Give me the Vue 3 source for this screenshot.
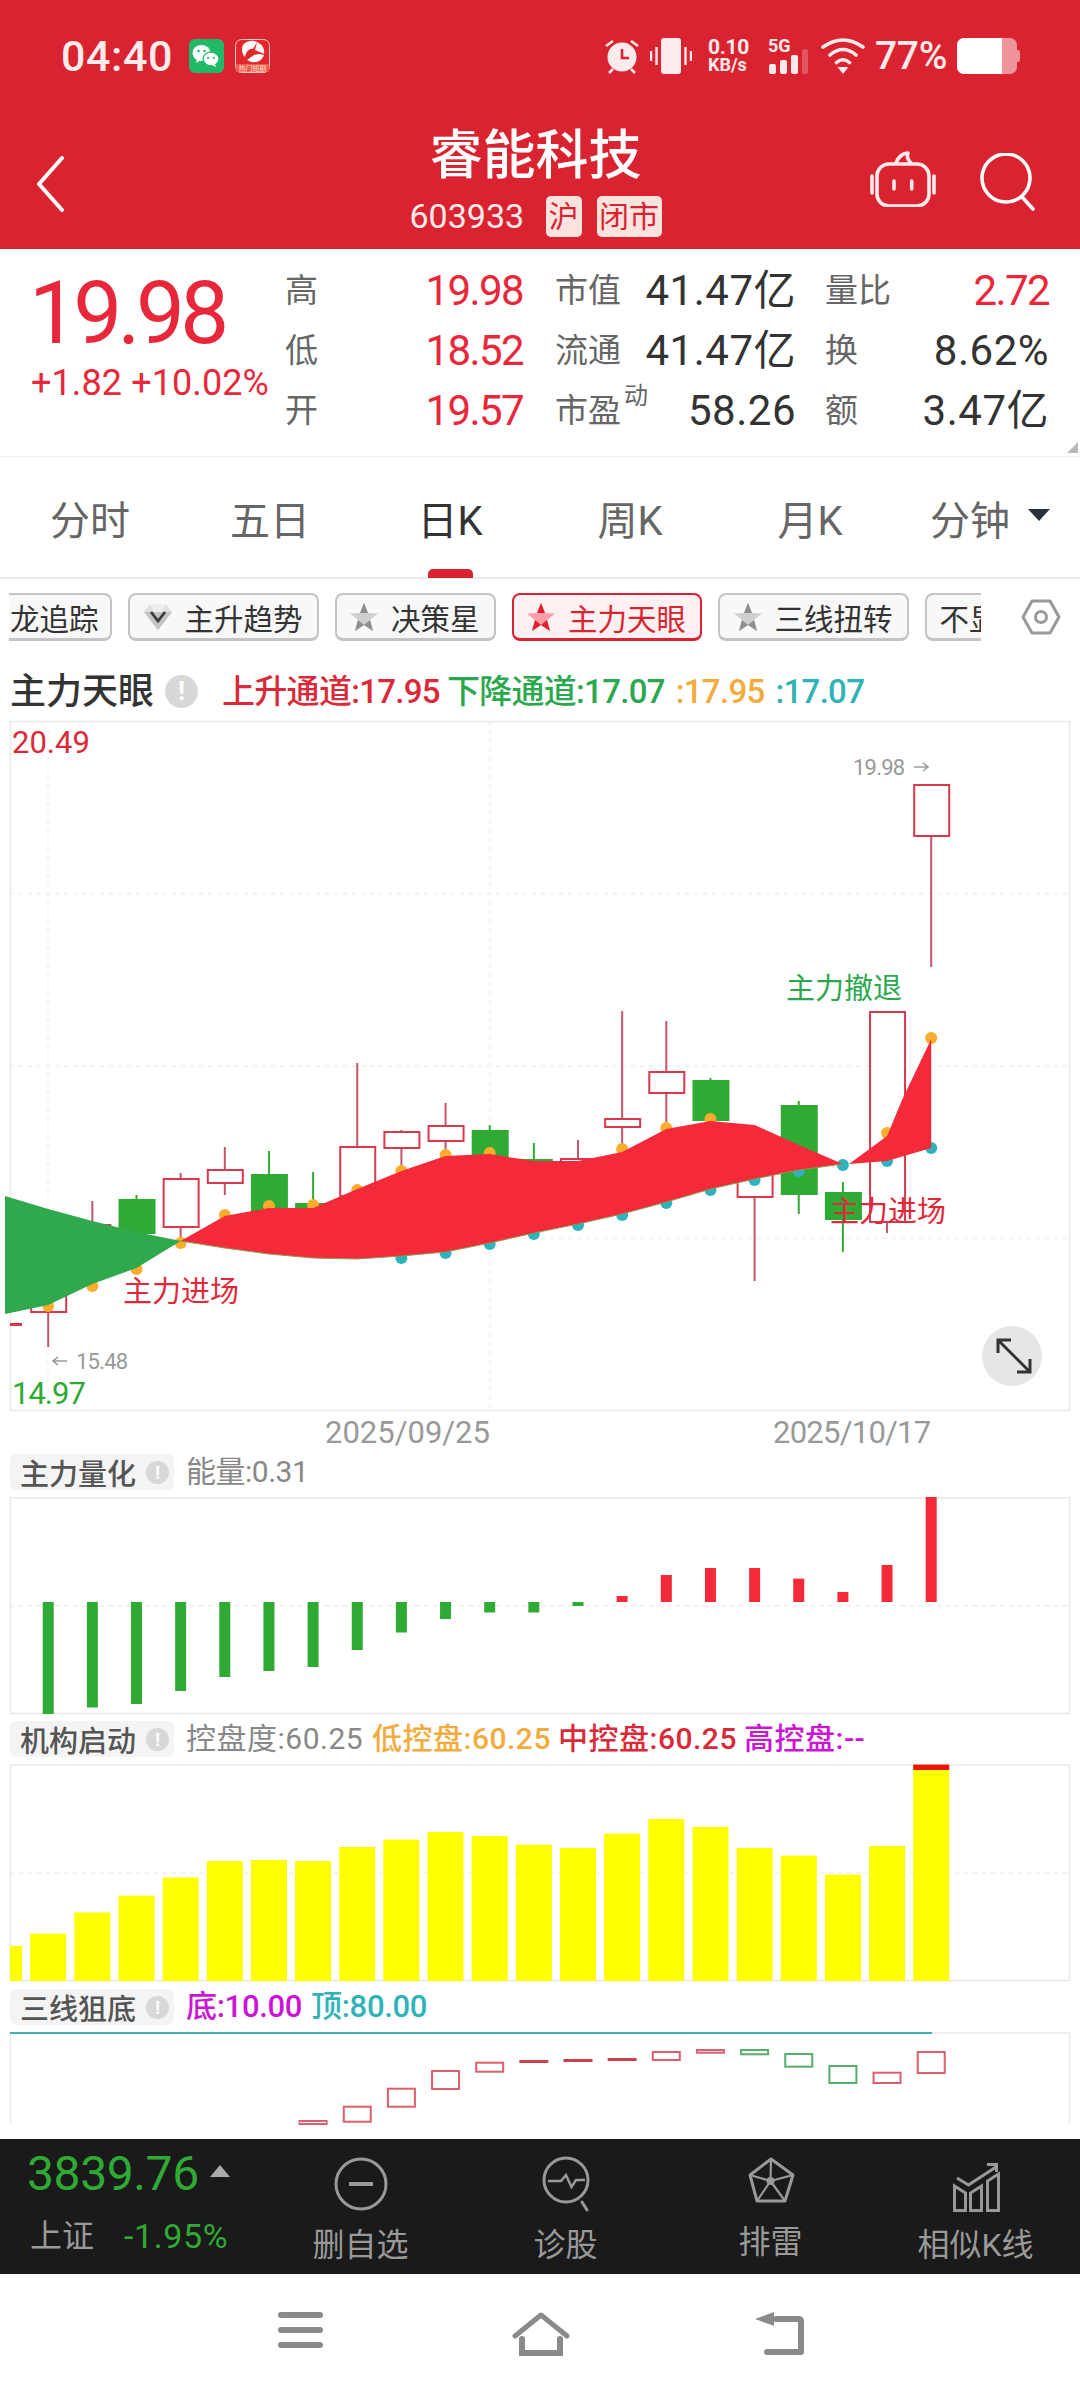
<script setup>
const X = (i) => 48.2 + 44.15 * i

// i, wickTop, wickBottom, bodyTop, bodyBottom, rising
const candleData = [
  [0, 1270, 1347, 1270, 1312, 1], [1, 1201, 1270, 1225, 1265, 1], [2, 1195, 1240, 1200, 1233, 0],
  [3, 1173, 1243, 1179, 1227, 1], [4, 1147, 1195, 1170, 1183, 1], [5, 1151, 1215, 1175, 1211, 0],
  [6, 1172, 1215, 1204, 1212, 0], [7, 1063, 1200, 1147, 1196, 1], [8, 1130, 1171, 1132, 1148, 1],
  [9, 1103, 1157, 1126, 1141, 1], [10, 1125, 1160, 1131, 1158, 0], [11, 1143, 1165, 1160, 1165, 0],
  [12, 1140, 1175, 1159, 1175, 1], [13, 1011, 1152, 1119, 1127, 1], [14, 1021, 1129, 1072, 1093, 1],
  [15, 1078, 1122, 1081, 1120, 0], [16, 1170, 1281, 1170, 1197, 1], [17, 1101, 1214, 1106, 1194, 0],
  [18, 1182, 1252, 1193, 1219, 0], [19, 1012, 1233, 1012, 1222, 1], [20, 785, 967, 785, 836, 1]
]
const candles = candleData.map(([i, wt, wb, bt, bb, up]) => ({
  x: X(i), wt, wb, bt, bb,
  color: up ? '#d8394d' : '#2faa35',
  wick: up ? '#c4566a' : '#2faa35',
  fill: up ? '#fff' : '#2faa35'
}))

const orange = [[0,1306],[1,1286],[2,1269],[3,1243],[4,1215],[5,1206],[6,1205],[7,1190],[8,1171],[9,1155],[10,1153],[13,1149],[14,1128],[15,1119],[19,1133],[20,1038]]
const cyan = [[8,1258],[9,1253],[10,1244],[11,1234],[12,1225],[13,1215],[14,1203],[15,1190],[16,1180],[17,1171],[18,1165],[19,1161],[20,1148]]
const orangeDots = orange.map(([i, y]) => ({ x: X(i), y }))
const cyanDots = cyan.map(([i, y]) => ({ x: X(i), y }))

const upper = [1241,1216,1208,1208,1189,1171,1156,1154,1161,1161,1152,1129,1121,1125,1145,1164]
const lower = [1241,1248,1254,1258,1259,1256,1252,1243,1233,1224,1214,1202,1189,1179,1170,1164]
const toPts = (arr) => arr.map((y, k) => `${X(k + 3).toFixed(1)},${y}`)
const redBand = [...toPts(upper), ...toPts(lower).reverse()].join(' ')
const lowerEdge = toPts(lower).join(' ')
const redTail = `849,1164 ${X(19).toFixed(1)},1136 902,1100 ${X(20).toFixed(1)},1039 ${X(20).toFixed(1)},1148 ${X(19).toFixed(1)},1161`
const greenBand = `5,1196 ${X(0)},1209 ${X(1)},1221 ${X(2)},1232 ${X(3)},1241 ${X(2)},1268 ${X(1)},1284 ${X(0)},1305 5,1314`

const energyEnds = [1714,1707.5,1704,1691,1677,1671,1667,1650,1632.5,1619,1612.5,1612.5,1606,1596,1575,1568,1568,1578.6,1592,1565,1497]
const energy = energyEnds.map((end, i) => ({
  x: X(i) - 5.5,
  y: end > 1602 ? 1602 : end,
  h: Math.abs(end - 1602),
  fill: end > 1602 ? '#2faa35' : '#f42a3a'
}))

const controlTops = [1933.6,1912.5,1895.7,1877.5,1861,1860,1861,1847,1839.6,1832,1836,1844.6,1848,1833.6,1819,1827,1848,1855.7,1874.6,1846,1764.6]
const control = controlTops.map((y, i) => ({ x: X(i) - 18, y, h: 1981 - y }))

const thirdData = [
  [6,2121,3,'r'],[7,2106.7,15,'r'],[8,2088.7,18,'r'],[9,2071,18,'r'],[10,2062.7,9,'r'],
  [11,2061,1,'d'],[12,2060,1,'d'],[13,2059,1,'d'],[14,2052,8,'r'],[15,2050,2.7,'r'],
  [16,2050,4.3,'g'],[17,2054,12.7,'g'],[18,2066,17,'g'],[19,2072.7,10.3,'r'],[20,2052,21,'r']
]
const thirdColors = { r: '#d9606c', d: '#c9404e', g: '#56ad6c' }
const third = thirdData.map(([i, y, h, c]) => ({ x: X(i) - 13.5, y, h, color: thirdColors[c] }))

const tabs = [
  { label: '分时' }, { label: '五日' }, { label: '日K', active: true },
  { label: '周K' }, { label: '月K' }, { label: '分钟', menu: true }
]
const chips = [
  { label: '主升趋势', kind: 'gem' }, { label: '决策星', kind: 'star' },
  { label: '主力天眼', kind: 'star', active: true }, { label: '三线扭转', kind: 'star' }
]
</script>

<template>
  <div class="page">
    <header class="top">
      <div class="status">
        <div class="status-left">
          <span class="time">04:40</span>
          <svg class="app-ico first" width="35" height="34" viewBox="0 0 35 34">
            <rect width="35" height="34" rx="6" fill="#20b968" />
            <ellipse cx="12.500" cy="14" rx="9" ry="8" fill="#fff" />
            <path d="M8 20l-1 4 5-3z" fill="#fff" />
            <ellipse cx="22" cy="20" rx="8" ry="6.800" fill="#fff" stroke="#20b968" stroke-width="1.200" />
            <path d="M26 25l1 3-4-2z" fill="#fff" />
            <circle cx="9.500" cy="12" r="1.300" fill="#20b968" /><circle cx="15.500" cy="12" r="1.300" fill="#20b968" />
            <circle cx="19" cy="19" r="1.100" fill="#20b968" /><circle cx="25" cy="19" r="1.100" fill="#20b968" />
          </svg>
          <svg class="app-ico" width="35" height="34" viewBox="0 0 35 34">
            <rect x="0.500" y="0.500" width="34" height="33" rx="6" fill="#e4272c" stroke="#f8c9c0" />
            <path d="M8 6C12 1 19 1 22 3L18 10C15 9 11 12 10 18C7 15 6 10 8 6z" fill="#fff" />
            <path d="M22 3C27 5 30 10 29 15L20 11z" fill="#fff" opacity=".95" />
            <path d="M29 16C27 22 20 26 12 21L19 16L24 15z" fill="#fff" />
            <rect x="1" y="25" width="33" height="8" fill="#ef5a4a" />
            <text x="17.500" y="32" class="mini" text-anchor="middle">热门短剧</text>
          </svg>
        </div>
        <div class="status-right">
          <svg width="36" height="36" viewBox="0 0 36 36" class="si">
            <circle cx="18" cy="19" r="14.500" fill="#fdeaea" />
            <path d="M18 11v9h7" fill="none" stroke="#da2330" stroke-width="2.600" />
            <path d="M2 8l7-5M34 8l-7-5M5 35l4-4M31 35l-4-4" stroke="#fdeaea" stroke-width="2.600" fill="none" />
          </svg>
          <svg width="42" height="36" viewBox="0 0 42 36" class="si s-vib">
            <rect x="11" width="20" height="36" rx="3" fill="#fdeaea" />
            <path d="M6.500 9v18M1 13v10M35.500 9v18M41 13v10" stroke="#fdeaea" stroke-width="2.400" />
          </svg>
          <div class="speed">
            <span class="sp-a">0.10</span>
            <span class="sp-b">KB/s</span>
          </div>
          <div class="net">
            <span class="net-t">5G</span>
            <svg width="41" height="25" viewBox="0 0 41 25" class="net-b">
              <rect x="1" y="15" width="7" height="10" rx="2" fill="#fdeaea" />
              <rect x="12" y="11" width="7" height="14" rx="2" fill="#fdeaea" />
              <rect x="23" y="6" width="7" height="19" rx="2" fill="#fdeaea" />
              <rect x="34" y="0" width="6" height="25" rx="2" fill="#fdeaea" opacity=".25" />
            </svg>
          </div>
          <svg width="44" height="36" viewBox="0 0 44 36" class="si s-wifi">
            <path d="M2 9Q22-5 42 9M9 17Q22 6 35 17M15.500 24.500Q22 19 28.500 24.500" fill="none" stroke="#fdeaea" stroke-width="3.600" stroke-linecap="round" />
            <path d="M16.500 29h11L22 36z" fill="#fdeaea" />
          </svg>
          <span class="batt-t">77%</span>
          <svg width="63" height="36" viewBox="0 0 63 36" class="s-batt">
            <rect width="60" height="36" rx="7" fill="#ef939b" />
            <path d="M7 0h38v36H7a7 7 0 0 1-7-7V7a7 7 0 0 1 7-7z" fill="#fff" />
            <rect x="59" y="12" width="4" height="12" rx="2" fill="#ef939b" />
          </svg>
        </div>
      </div>
      <div class="nav">
        <svg class="back" width="30" height="56" viewBox="0 0 30 56">
          <path d="M27 2L4 28l23 26" fill="none" stroke="#fff" stroke-width="4" stroke-linecap="round" stroke-linejoin="round" />
        </svg>
        <div class="nav-c">
          <div class="title">睿能科技</div>
          <div class="code-row">
            <span class="code">603933</span>
            <span class="tag t1">沪</span>
            <span class="tag t2">闭市</span>
          </div>
        </div>
        <div class="nav-r">
          <svg width="66" height="56" viewBox="0 0 66 56">
            <g fill="none" stroke="#fdeaea" stroke-width="3.600" stroke-linecap="round">
              <rect x="7" y="13" width="52" height="42" rx="12" />
              <path d="M2 25v17M64 25v17M24 30v8M41.700 30v8" />
              <path d="M26 12C28 6 33 2 38 2C36 6 38 9 41 12" stroke-linejoin="round" />
            </g>
          </svg>
          <svg class="search" width="56" height="58" viewBox="0 0 56 58">
            <circle cx="26" cy="25" r="24" fill="none" stroke="#fff" stroke-width="3.600" />
            <path d="M42 44l11 12" stroke="#fff" stroke-width="3.600" stroke-linecap="round" />
          </svg>
        </div>
      </div>
    </header>

    <section class="quote">
      <div class="price-box">
        <div class="price">19.98</div>
        <div class="change">+1.82 +10.02%</div>
      </div>
      <div class="stats">
        <div class="cell"><span class="k">高</span><span class="v red">19.98</span></div>
        <div class="cell c2"><span class="k">市值</span><span class="v">41.47亿</span></div>
        <div class="cell c3"><span class="k">量比</span><span class="v red">2.72</span></div>
        <div class="cell"><span class="k">低</span><span class="v red">18.52</span></div>
        <div class="cell c2"><span class="k">流通</span><span class="v">41.47亿</span></div>
        <div class="cell c3"><span class="k">换</span><span class="v">8.62%</span></div>
        <div class="cell"><span class="k">开</span><span class="v red">19.57</span></div>
        <div class="cell c2"><span class="k">市盈<sup class="dyn">动</sup></span><span class="v">58.26</span></div>
        <div class="cell c3"><span class="k">额</span><span class="v">3.47亿</span></div>
      </div>
      <i class="corner"></i>
    </section>

    <nav class="tabs">
      <div v-for="t in tabs" :key="t.label" class="tab" :class="{ on: t.active }">
        <span>{{ t.label }}</span>
        <i v-if="t.menu" class="caret"></i>
        <i v-if="t.active" class="tab-bar"></i>
      </div>
    </nav>

    <div class="chip-row">
      <div class="chips">
        <div class="chip cut"><span>龙追踪</span></div>
        <div v-for="c in chips" :key="c.label" class="chip" :class="{ on: c.active }">
          <svg v-if="c.kind === 'star'" width="30" height="30" viewBox="0 0 30 30">
            <polygon points="15,1 19,11 29,11.5 21,18 24,29 15,23 6,29 9,18 1,11.5 11,11" :fill="c.active ? '#ff9ea8' : '#cfcfcf'" />
            <g :fill="c.active ? '#e2202f' : '#8d8d8d'">
              <polygon points="15,1 19,11 11,11" /><polygon points="9,18 6,29 15,23" /><polygon points="21,18 24,29 15,23" />
            </g>
          </svg>
          <svg v-else width="30" height="30" viewBox="0 0 30 30">
            <polygon points="7,2 23,2 29,10 15,28 1,10" fill="#e0e0e0" />
            <polygon points="1,10 29,10 15,28" fill="#c4c4c4" />
            <polygon points="7,2 23,2 19,10 11,10" fill="#efefef" />
            <path d="M8 10l7 9 7-9" fill="none" stroke="#3a3a3a" stroke-width="2.800" />
          </svg>
          <span>{{ c.label }}</span>
        </div>
        <div class="chip tail"><span>不显</span></div>
      </div>
      <svg class="gear" width="40" height="36" viewBox="0 0 40 36">
        <path d="M11 2h18l9 16-9 16H11L2 18z" fill="none" stroke="#999" stroke-width="3" stroke-linejoin="round" />
        <circle cx="20" cy="18" r="5.500" fill="none" stroke="#999" stroke-width="3" />
      </svg>
    </div>

    <div class="ind-row">
      <span class="ind-name">主力天眼</span>
      <span class="info big">!</span>
      <span class="ind-vals">
        <span class="c-red">上升通道:17.95</span>
        <span class="c-green g1">下降通道:17.07</span>
        <span class="c-orange g2">:17.95</span>
        <span class="c-teal g2">:17.07</span>
      </span>
    </div>

    <svg class="chart" width="1080" height="690" viewBox="0 721 1080 690">
      <rect x="10.500" y="721.500" width="1059" height="689" fill="none" stroke="#e9e9e9" stroke-width="1.500" />
      <g stroke="#efefef" stroke-dasharray="4 5" stroke-width="1.500">
        <path d="M10 893.500H1069M10 1066H1069M10 1238.500H1069M48 721V1410M490 721V1410" />
      </g>
      <text x="12" y="753" class="ax a-red">20.49</text>
      <text x="12" y="1404" class="ax a-green tight">14.97</text>
      <text x="853" y="775" class="note">19.98</text>
      <path d="M914 767h14m-5-4l5 4-5 4" fill="none" stroke="#999" stroke-width="1.600" />
      <path d="M67 1361H53m5-4l-5 4 5 4" fill="none" stroke="#999" stroke-width="1.600" />
      <text x="76" y="1369" class="note">15.48</text>
      <rect x="10" y="1323" width="12" height="3" fill="#d5394a" />
      <g v-for="c in candles" :key="c.x">
        <line :x1="c.x" :x2="c.x" :y1="c.wt" :y2="c.wb" :stroke="c.wick" stroke-width="2" />
        <rect :x="c.x - 17" :y="c.bt" width="35" :height="c.bb - c.bt" :fill="c.fill" :stroke="c.color" stroke-width="2" />
      </g>
      <circle v-for="d in orangeDots" :key="'o' + d.x" :cx="d.x" :cy="d.y" r="6" fill="#f9ad2c" />
      <circle v-for="d in cyanDots" :key="'c' + d.x" :cx="d.x" :cy="d.y" r="6" fill="#2cb3bd" />
      <polygon :points="greenBand" fill="#2fa84e" />
      <polygon :points="redBand" fill="#f42a3a" />
      <polyline :points="lowerEdge" fill="none" stroke="#8a9a50" stroke-width="1" />
      <polygon :points="redTail" fill="#f42a3a" />
      <text x="123" y="1302" class="sig s-red">主力进场</text>
      <text x="830" y="1222" class="sig s-red">主力进场</text>
      <text x="786" y="999" class="sig s-green">主力撤退</text>
      <circle cx="1012" cy="1356" r="30" fill="#e6e6e6" />
      <path d="M998 1340l32 32M998 1353v-13h13M1030 1359v13h-13" fill="none" stroke="#333" stroke-width="3" />
    </svg>

    <div class="axis">
      <span class="d1">2025/09/25</span>
      <span class="d2">2025/10/17</span>
    </div>

    <div class="sub">
      <div class="sub-chip"><span>主力量化</span><span class="info">!</span></div>
      <span class="sv c-grey">能量:0.31</span>
    </div>
    <svg class="chart" width="1080" height="217" viewBox="0 1497 1080 217">
      <rect x="10.500" y="1498" width="1059" height="215.500" fill="none" stroke="#e9e9e9" stroke-width="1.500" />
      <path d="M10 1606H1069" stroke="#eee" stroke-width="1.500" stroke-dasharray="4 5" />
      <rect v-for="b in energy" :key="b.x" :x="b.x" :y="b.y" width="11" :height="b.h" :fill="b.fill" />
    </svg>

    <div class="sub s2">
      <div class="sub-chip"><span>机构启动</span><span class="info">!</span></div>
      <span class="sv c-grey">控盘度:60.25</span>
      <span class="sv c-orange">低控盘:60.25</span>
      <span class="sv c-red">中控盘:60.25</span>
      <span class="sv c-mag">高控盘:--</span>
    </div>
    <svg class="chart" width="1080" height="217" viewBox="0 1764 1080 217">
      <rect x="10.500" y="1765" width="1059" height="215.500" fill="none" stroke="#e9e9e9" stroke-width="1.500" />
      <path d="M10 1873H1069" stroke="#eee" stroke-width="1.500" stroke-dasharray="4 5" />
      <rect x="10" y="1946" width="12" height="35" fill="#ffff00" />
      <rect v-for="b in control" :key="b.x" :x="b.x" :y="b.y" width="36" :height="b.h" fill="#ffff00" />
      <rect x="913.200" y="1764.600" width="36" height="5.400" fill="#ee1111" />
    </svg>

    <div class="sub s3">
      <div class="sub-chip"><span>三线狙底</span><span class="info">!</span></div>
      <span class="sv c-mag">底:10.00</span>
      <span class="sv c-teal">顶:80.00</span>
    </div>
    <svg class="chart" width="1080" height="92" viewBox="0 2032 1080 92">
      <path d="M10.500 2124V2033H1069.500V2124" fill="none" stroke="#e9e9e9" stroke-width="1.500" />
      <path d="M10 2033H932" stroke="#3fb3b3" stroke-width="2" />
      <rect v-for="t in third" :key="t.x" :x="t.x" :y="t.y" width="27" :height="t.h" fill="#fff" :stroke="t.color" stroke-width="2" />
    </svg>

    <footer class="dock">
      <div class="idx">
        <div class="idx-top">
          <span class="idx-num">3839.76</span>
          <i class="idx-up"></i>
        </div>
        <div class="idx-bot">
          <span class="idx-name">上证</span>
          <span class="idx-pct">-1.95%</span>
        </div>
      </div>
      <div class="act">
        <svg width="60" height="60" viewBox="0 0 60 60">
          <circle cx="30" cy="29" r="25" fill="none" stroke="#999" stroke-width="3" />
          <path d="M18 29h24" stroke="#999" stroke-width="4" />
        </svg>
        <span>删自选</span>
      </div>
      <div class="act">
        <svg width="60" height="60" viewBox="0 0 60 60">
          <circle cx="30" cy="25" r="22" fill="none" stroke="#999" stroke-width="3" />
          <path d="M46 47l5 8" stroke="#999" stroke-width="3" stroke-linecap="round" />
          <path d="M12 26h13l5-6 5.500 12 4.500-7h9" fill="none" stroke="#999" stroke-width="2.500" />
        </svg>
        <span>诊股</span>
      </div>
      <div class="act lift">
        <svg width="60" height="60" viewBox="0 0 60 60">
          <path d="M30 4l22 16-8 26H16L9 20z" fill="none" stroke="#999" stroke-width="3" stroke-linejoin="round" />
          <path d="M29.500 26L30 4M29.500 26L52 20M29.500 26L44 46M29.500 26L16 46M29.500 26L9 20" fill="none" stroke="#999" stroke-width="2.200" />
          <circle cx="29.500" cy="26" r="4" fill="#999" />
        </svg>
        <span>排雷</span>
      </div>
      <div class="act">
        <svg width="60" height="60" viewBox="0 0 60 60">
          <g fill="none" stroke="#999" stroke-width="3">
            <path d="M8.500 55.500V31l11 7v17.500zM24.500 55.500V38l11-7v24.500zM41.500 55.500V26l11-7v36.500z" />
            <path d="M11 23l11.500 7L50 12" />
            <path d="M41 9.500h9.500V17" />
          </g>
        </svg>
        <span>相似K线</span>
      </div>
    </footer>

    <div class="sysnav">
      <svg width="46" height="38" viewBox="0 0 46 38">
        <g fill="#8a8a8a">
          <rect width="45" height="6" rx="3" /><rect y="15" width="45" height="6" rx="3" /><rect y="30" width="45" height="6" rx="3" />
        </g>
      </svg>
      <svg width="58" height="46" viewBox="0 0 58 46">
        <path d="M3 24L29 3l26 21" fill="none" stroke="#8a8a8a" stroke-width="5" stroke-linecap="round" stroke-linejoin="round" />
        <path d="M10 27v14h38V27" fill="none" stroke="#8a8a8a" stroke-width="6" stroke-linecap="round" />
      </svg>
      <svg width="50" height="44" viewBox="0 0 50 44">
        <path d="M22 7h23a2 2 0 0 1 2 2v31H13" fill="none" stroke="#8a8a8a" stroke-width="6" stroke-linecap="round" stroke-linejoin="round" />
        <path d="M1 7L20 0v14z" fill="#8a8a8a" />
      </svg>
    </div>
  </div>
</template>

<style>
html, body { margin: 0; background: #fff; }
</style>

<style scoped>
.page {
  width: 1080px;
  height: 2400px;
  overflow: hidden;
  background: #fff;
  font-family: Roboto, "Noto Sans CJK SC", sans-serif;
  color: #333;
  display: flex;
  flex-direction: column;
}
i { display: block; font-style: normal; }

.top { height: 249px; background: #da2330; color: #fff; flex: none; }
.status { height: 112px; display: flex; justify-content: space-between; align-items: center; padding: 0 60px 0 61px; }
.status-left, .status-right { display: flex; align-items: center; }
.time { font-size: 43px; line-height: 44px; font-weight: 500; width: 111px; color: #fdeaea; letter-spacing: 0.6px; white-space: nowrap; }
.app-ico { margin-left: 11px; }
.app-ico.first { margin-left: 17px; }
.mini { font-size: 7px; fill: #ffe3d6; }
.status-right { color: #fdeaea; height: 36px; }
.si { flex: none; }
.s-vib { margin-left: 10px; }
.speed { margin-left: 16px; width: 42px; display: flex; flex-direction: column; font-weight: 700; white-space: nowrap; }
.sp-a { font-size: 21px; line-height: 18px; letter-spacing: -0.3px; }
.sp-b { font-size: 18px; line-height: 18px; }
.net { margin-left: 18px; width: 41px; height: 36px; position: relative; }
.net-t { font-size: 18px; line-height: 16px; font-weight: 700; display: block; }
.net-b { position: absolute; left: 0; bottom: 0; }
.s-wifi { margin-left: 12px; }
.batt-t { margin-left: 10px; font-size: 39px; line-height: 40px; font-weight: 500; width: 72px; white-space: nowrap; letter-spacing: -0.3px; }
.s-batt { margin-left: 10px; }

.nav { height: 137px; display: grid; grid-template-columns: 1fr auto 1fr; align-items: start; }
.back { margin: 44px 0 0 35px; }
.nav-c { display: flex; flex-direction: column; align-items: center; padding-right: 9px; }
.title { font-size: 53px; line-height: 64px; margin-top: 12px; font-weight: 500; }
.code-row { display: flex; align-items: center; margin-top: 8px; height: 41px; }
.code { font-size: 34px; line-height: 41px; width: 117px; color: #fdeaea; white-space: nowrap; }
.tag { height: 41px; line-height: 41px; background: #fde3df; color: #da2330; font-size: 30px; border-radius: 5px; text-align: center; }
.t1 { width: 36px; margin-left: 19px; }
.t2 { width: 65px; margin-left: 15px; }
.nav-r { display: flex; justify-content: flex-end; align-items: flex-start; padding-right: 44px; margin-top: 39px; }
.search { margin-left: 44px; margin-top: 2px; }

.quote { height: 207px; border-bottom: 1px solid #f0f0f0; display: flex; flex: none; position: relative; }
.price-box { width: 285px; padding: 19px 0 0 31px; box-sizing: border-box; color: #e8283a; }
.price { font-size: 87px; line-height: 90px; letter-spacing: -4.6px; margin-left: -2px; white-space: nowrap; }
.change { font-size: 36px; line-height: 40px; margin-top: 5px; letter-spacing: 0.1px; white-space: nowrap; }
.stats { display: grid; grid-template-columns: 238px 273px 253px; grid-auto-rows: 60px; padding-top: 12px; }
.cell { display: flex; justify-content: space-between; align-items: center; }
.c2 { padding-left: 32px; }
.c3 { padding-left: 29px; }
.k { font-size: 33px; color: #666; line-height: 44px; white-space: nowrap; }
.dyn { font-size: 24px; line-height: 0; vertical-align: 18px; margin-left: 3px; }
.v { font-size: 42px; line-height: 48px; letter-spacing: 0.5px; color: #333; white-space: nowrap; }
.v.red { color: #e8283a; letter-spacing: -1.6px; }
.corner { position: absolute; right: 2px; bottom: 3px; width: 0; height: 0; border-left: 11px solid transparent; border-bottom: 11px solid #b9b9b9; }

.tabs { height: 120px; border-bottom: 2px solid #eaeaea; display: grid; grid-template-columns: repeat(6, 180px); flex: none; }
.tab { position: relative; display: flex; align-items: center; justify-content: center; padding-top: 2px; font-size: 40px; color: #666; }
.tab.on { color: #333; }
.caret { width: 0; height: 0; border-left: 11px solid transparent; border-right: 11px solid transparent; border-top: 12px solid #2a2f3c; margin: 0 0 6px 18px; }
.tab-bar { position: absolute; left: 68px; bottom: -1px; width: 45px; height: 9px; border-radius: 5px 5px 0 0; background: #da2330; }

.chip-row { display: flex; align-items: center; margin-top: 14px; height: 48px; flex: none; }
.chips { margin-left: 9px; width: 972px; display: flex; gap: 16px; overflow: hidden; }
.chip { flex: none; height: 48px; box-sizing: border-box; border: 2px solid #c4c4c4; border-bottom-width: 3px; border-radius: 8px; background: #f8f8f8; display: flex; align-items: center; gap: 12px; padding: 0 14px 0 12.5px; font-size: 29.5px; color: #333; white-space: nowrap; }
.chip.on { border-color: #da2330; background: #fff1f2; color: #da2330; }
.chip.cut { width: 103px; border-left: 0; border-radius: 0 8px 8px 0; padding: 0 0 0 1px; }
.chip.tail { padding-left: 13px; width: 90px; }
.gear { margin-left: 40px; flex: none; }

.ind-row { height: 80px; box-sizing: border-box; padding: 22px 0 0 10px; display: flex; align-items: flex-start; flex: none; }
.ind-name { font-size: 36px; line-height: 58px; font-weight: 500; color: #333; white-space: nowrap; width: 155px; }
.info { flex: none; width: 23px; height: 23px; border-radius: 50%; background: #d8d8d8; color: #fff; font-size: 19px; line-height: 23px; text-align: center; font-weight: 700; }
.info.big { width: 33px; height: 33px; line-height: 33px; font-size: 26px; margin-top: 12px; }
.ind-vals { margin-left: 24px; font-size: 33px; line-height: 58px; font-weight: 500; letter-spacing: -0.7px; display: flex; white-space: nowrap; }
.g1 { margin-left: 7px; }
.g2 { margin-left: 11px; }
.c-red { color: #da2a3a; }
.c-green { color: #2ba84e; }
.c-orange { color: #f2ab3c; }
.c-teal { color: #2fb3b8; }
.c-grey { color: #888; }
.c-mag { color: #cc14d4; }

.chart { display: block; flex: none; overflow: visible; }
.ax { font-size: 31px; }
.tight { letter-spacing: -1px; }
.a-red { fill: #da2a3a; }
.a-green { fill: #2faa35; }
.note { font-size: 22px; fill: #999; letter-spacing: -0.8px; }
.sig { font-size: 29px; }
.s-red { fill: #e0283a; }
.s-green { fill: #2ba84e; }

.axis { height: 43px; flex: none; display: flex; align-items: center; font-size: 31px; color: #999; white-space: nowrap; }
.d1 { margin-left: 325px; width: 164px; }
.d2 { margin-left: 284px; letter-spacing: -0.75px; }

.sub { height: 36px; margin: 0 0 7px 10px; display: flex; align-items: center; flex: none; gap: 12px; }
.s2 { margin-top: 7px; margin-bottom: 7px; }
.s3 { margin-top: 8px; margin-bottom: 7px; }
.sub-chip { width: 164px; height: 36px; box-sizing: border-box; padding-left: 10px; background: #f4f4f4; border-radius: 7px; display: flex; align-items: center; justify-content: space-between; padding-right: 5px; font-size: 29px; font-weight: 500; color: #555; }
.sv { font-size: 30px; line-height: 36px; letter-spacing: -0.5px; white-space: nowrap; }
.s2 .sv { width: 174px; letter-spacing: 0.5px; }
.s2 .sv:not(.c-grey), .s3 .sv { font-weight: 500; }
.s3 .sv { font-size: 31px; letter-spacing: -0.3px; width: 113px; }

.dock { margin-top: 15px; height: 135px; flex: none; background: #1a1a1a; display: grid; grid-template-columns: 258px repeat(4, 205px); }
.idx { padding-left: 27px; display: flex; flex-direction: column; }
.idx-top { display: flex; align-items: flex-start; margin-top: 7px; height: 56px; }
.idx-num { font-size: 48px; line-height: 56px; color: #2faa35; letter-spacing: -0.4px; width: 183px; white-space: nowrap; }
.idx-up { width: 0; height: 0; margin-top: 19px; border-left: 10px solid transparent; border-right: 10px solid transparent; border-bottom: 12px solid #aaa; }
.idx-bot { display: flex; align-items: center; margin-top: 12px; height: 44px; white-space: nowrap; }
.idx-name { font-size: 32px; color: #999; line-height: 44px; margin-left: 3px; }
.idx-pct { font-size: 34px; color: #2faa35; margin-left: 30px; line-height: 44px; letter-spacing: 0.6px; }
.act { display: flex; flex-direction: column; align-items: center; padding-top: 16px; font-size: 32px; color: #999; white-space: nowrap; }
.act span { line-height: 40px; margin-top: 10px; }
.act.lift span { margin-top: 7px; }

.sysnav { height: 126px; flex: none; background: #fff; display: flex; align-items: flex-start; padding: 38px 0 0 278px; }
.sysnav svg:nth-child(2) { margin-left: 188px; }
.sysnav svg:nth-child(3) { margin-left: 184px; }
</style>
